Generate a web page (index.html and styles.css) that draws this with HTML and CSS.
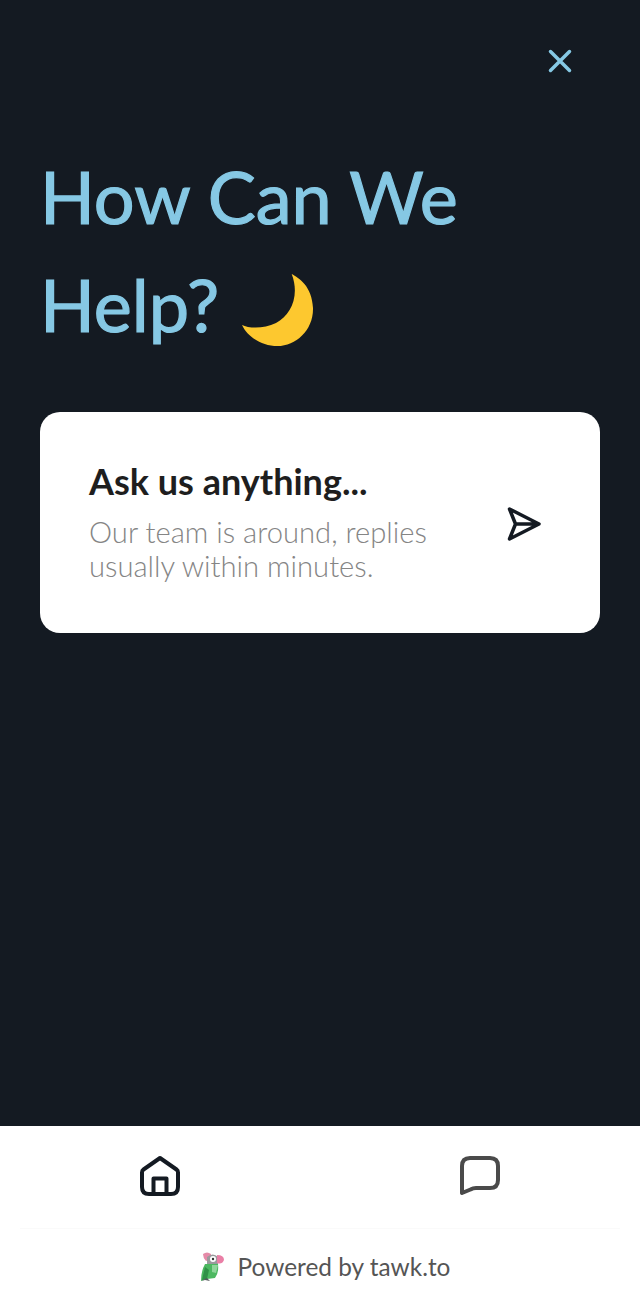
FILE: index.html
```html
<!DOCTYPE html>
<html>
	<head>
		<title>How Can We Help?</title>
		<link rel="stylesheet" href="styles.css">
	</head>
	<body>
		<div class="app">
			<main class="home">
				<div class="close-row">
					<svg class="close-icon" viewBox="0 0 24 24" width="24" height="24">
						<path d="M2.500 2.500 L21.500 21.500 M21.500 2.500 L2.500 21.500"/>
					</svg>
				</div>
				<h1 class="title">How Can We<br>Help?
					<svg class="moon" viewBox="0 0 76 76" width="76" height="76">
						<path d="M52.700 4 C60 8 73 16 74 38 C74.500 60 57 76 38.500 76 C22 76 8 66 3 55 C10 58.500 25 59 37 53 C52 45 61 26 52.700 4 Z"/>
					</svg>
				</h1>
				<section class="card">
					<div class="card-text">
						<h2 class="card-title">Ask us anything...</h2>
						<p class="card-sub">Our team is around, replies usually within minutes.</p>
					</div>
					<svg class="send-icon" viewBox="0 0 36 36" width="36" height="36">
						<path d="M3.500 3 L33 18 L3.500 33 L9.500 18 Z M9.500 18 L33 18"/>
					</svg>
				</section>
			</main>
			<nav class="tabs">
				<div class="tab">
					<svg class="tab-icon home-icon" viewBox="0 0 40 40" width="40" height="40">
						<path d="M20 2 L36.500 13.500 Q38 14.500 38 16.500 V31 Q38 38 31 38 H9 Q2 38 2 31 V16.500 Q2 14.500 3.500 13.500 Z"/>
						<path d="M13.500 38 V22.500 H26.500 V38"/>
					</svg>
				</div>
				<div class="tab">
					<svg class="tab-icon chat-icon" viewBox="0 0 40 40" width="40" height="40">
						<path d="M2 37 V10 Q2 2 10 2 H30 Q38 2 38 10 V24 Q38 32 30 32 H16 Q13 32 10.500 33.500 Z"/>
					</svg>
				</div>
			</nav>
			<footer class="powered">
				<svg class="parrot" viewBox="0 0 28 30" width="28" height="30">
					<path fill="#e58aa8" d="M5 2 Q9 -1 13 2 L13 7 L8 9 Q5 6 5 2 Z"/>
					<path fill="#9a9a9c" d="M9 5 Q15 0 20 5 L20 13 L9 14 Z"/>
					<circle fill="#fff" cx="15" cy="7" r="3"/>
					<circle fill="#333" cx="15" cy="7" r="1.200"/>
					<path fill="#ea7fa6" d="M19 3 Q26 3 26 8 Q24 13 19 11 Z"/>
					<path fill="#4cb860" d="M7 12 L20 12 Q21 21 17 26 L9 27 L3 29 Q3 19 7 12 Z"/>
					<path fill="#2f9146" d="M7 15 L11 18 L9 27 L4 28 Z"/>
					<path fill="#8fd69a" d="M14 13 L20 13 L18 21 L14 20 Z"/>
					<path fill="#55585c" d="M3 29 L9 26 L12 29 L7 28 Z"/>
				</svg>
				<span class="powered-text">Powered by tawk.to</span>
			</footer>
		</div>
	</body>
</html>
```

FILE: styles.css
```css
* {
	box-sizing: border-box;
}

html, body {
	margin: 0;
	padding: 0;
	height: 100%;
}

body {
	font-family: Lato, "Open Sans", sans-serif;
	background: #ffffff;
}

.app {
	display: flex;
	flex-direction: column;
	height: 1316px;
}

.home {
	height: 1126px;
	padding: 0 40px;
	background: #141a22;
}

.close-row {
	display: flex;
	justify-content: flex-end;
	padding: 49px 28px 0 0;
}

.close-icon {
	fill: none;
	stroke: #86c8e4;
	stroke-width: 3.500;
	stroke-linecap: round;
}

.title {
	margin: 69px 0 0 0;
	font-size: 72px;
	line-height: 108px;
	font-weight: 400;
	color: #86c8e4;
	-webkit-text-stroke: 1.200px #86c8e4;
}

.moon {
	fill: #fdc82f;
	vertical-align: -14px;
	margin-left: 1px;
}

.card {
	display: flex;
	align-items: center;
	justify-content: space-between;
	height: 221px;
	margin-top: 54px;
	padding: 0 58px 0 49px;
	background: #ffffff;
	border-radius: 20px;
}

.card-text {
	width: 360px;
	margin-bottom: 4px;
}

.card-title {
	margin: 0 0 12px 0;
	font-size: 36px;
	line-height: 44px;
	font-weight: 700;
	color: #1e1e1e;
}

.card-sub {
	margin: 0;
	font-size: 29.200px;
	line-height: 34px;
	font-weight: 300;
	color: #858585;
}

.send-icon {
	fill: none;
	stroke: #141a22;
	stroke-width: 3.500;
	stroke-linejoin: round;
	stroke-linecap: round;
	margin-top: 2px;
}

.tabs {
	display: flex;
	height: 102px;
	padding-bottom: 2px;
	background: #ffffff;
}

.tab {
	flex: 1;
	display: flex;
	align-items: center;
	justify-content: center;
}

.tab-icon {
	fill: none;
	stroke-width: 4;
	stroke-linejoin: round;
	stroke-linecap: round;
}

.home-icon {
	stroke: #141a22;
}

.chat-icon {
	stroke: #4a4a4a;
}

.powered {
	display: flex;
	align-items: center;
	justify-content: center;
	gap: 12px;
	height: 88px;
	margin: 0 20px;
	padding: 0 0 12px 8px;
	border-top: 1px solid #fafafa;
}

.parrot {
	flex: none;
}

.powered-text {
	font-size: 24.400px;
	color: #555555;
}
```
